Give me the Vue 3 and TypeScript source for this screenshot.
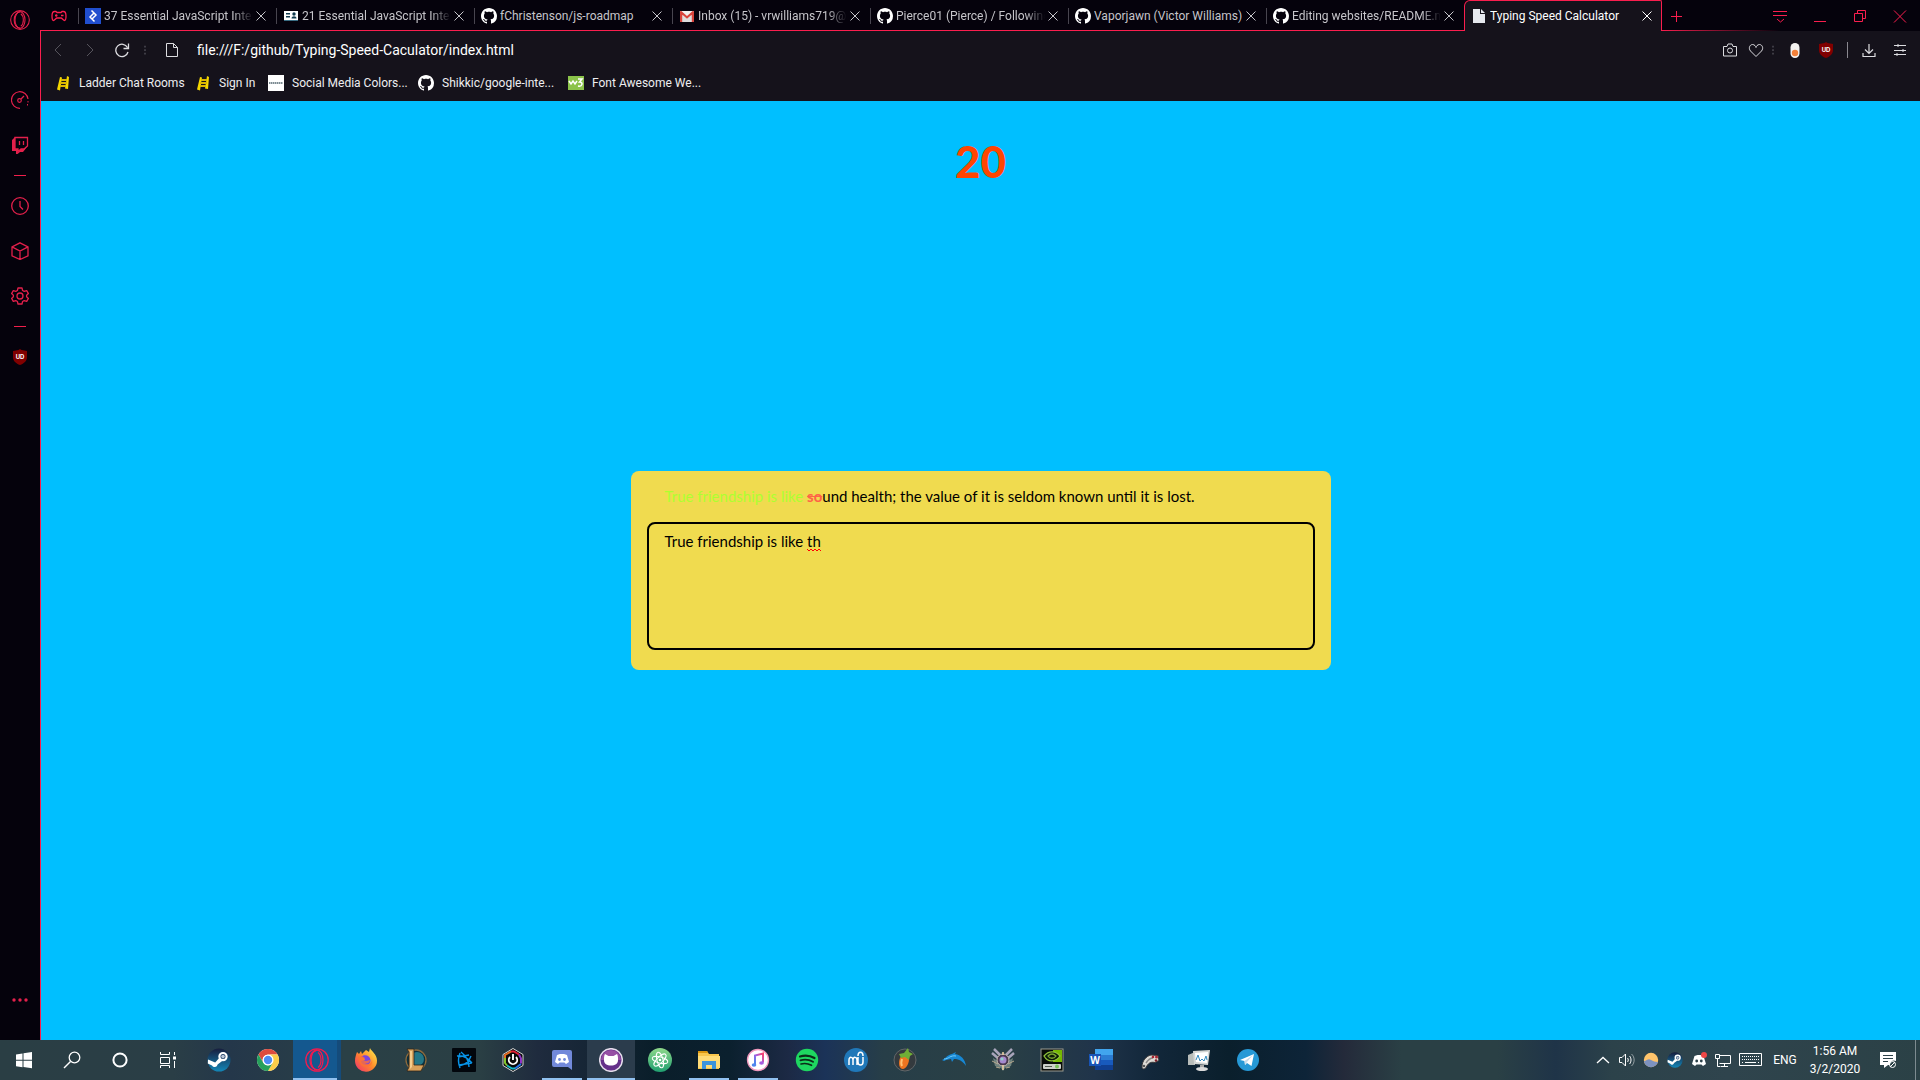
<script setup lang="ts">
import { h, ref } from 'vue'

interface Tab { title: string; icon: string; fade?: boolean; active?: boolean }
interface Bookmark { label: string; icon: string }
interface Launcher { label: string; icon: string; state?: 'running' | 'focused' | 'grouped' }

const octocat = 'M8 0C3.58 0 0 3.58 0 8c0 3.54 2.29 6.53 5.47 7.59.4.07.55-.17.55-.38 0-.19-.01-.82-.01-1.49-2.01.37-2.53-.49-2.69-.94-.09-.23-.48-.94-.82-1.13-.28-.15-.68-.52-.01-.53.63-.01 1.08.58 1.23.82.72 1.21 1.87.87 2.33.66.07-.52.28-.87.51-1.07-1.78-.2-3.64-.89-3.64-3.95 0-.87.31-1.59.82-2.15-.08-.2-.36-1.02.08-2.12 0 0 .67-.21 2.2.82.64-.18 1.32-.27 2-.27s1.36.09 2 .27c1.53-1.04 2.2-.82 2.2-.82.44 1.1.16 1.92.08 2.12.51.56.82 1.27.82 2.15 0 3.07-1.87 3.75-3.65 3.95.29.25.54.73.54 1.48 0 1.07-.01 1.93-.01 2.2 0 .21.15.46.55.38A8.01 8.01 0 0 0 16 8c0-4.42-3.58-8-8-8z'

const line = (d: string, width = 1) => `<path d="${d}" fill="none" stroke="currentColor" stroke-width="${width}"/>`
const steamMark = '<circle cx="12" cy="12" r="11.5" fill="url(#steam-fill)"/><path d="M1 11.500l7.200 3 4-4.500 3 3-4.600 3.600a3 3 0 0 1-5.600.9L.8 15.400z" fill="#fff"/><circle cx="16" cy="8.600" r="3.600" fill="#17375f" stroke="#fff" stroke-width="2.200"/><circle cx="16" cy="8.600" r="1.800" fill="#b9c6d8"/>'

// Each entry is [side of the square view box, markup].
const icons: Record<string, [number, string]> = {
  opera: [24, '<g fill="none" stroke="currentColor" stroke-width="1.300"><circle cx="12" cy="12" r="11.200"/><ellipse cx="12" cy="12" rx="6" ry="10"/><path d="M12 2C7.500 3 5 7 5 12s2.500 9 7 10M13 4.500c4 3 4 12 0 15"/></g>'],
  gamepad: [16, line('M5 3.500l1 1h4l1-1h1.500c2 0 2.500 2 2.500 4.500 0 3-.5 4.500-1.500 4.500S11 10 10 10H6c-1 0-2.500 2.500-3.500 2.500S1 11 1 8c0-2.500.5-4.500 2.500-4.500zM4 7.500h2.500M5.300 6.200v2.500M10 7.500h2.500', 1.300)],
  toptal: [16, '<rect width="16" height="16" fill="#204ecf"/><path d="M6.500 2.500L11 7l-4.500 4.500M9.500 13.500L5 9l4.500-4.500" fill="none" stroke="#fff" stroke-width="1.500"/>'],
  idcard: [16, '<path d="M1 3h14v9H1z" fill="#fff"/><path d="M3 5h4v1.500H3zM3 8h4v1.500H3z" fill="#123b4f"/><circle cx="11" cy="6" r="1.700" fill="#123b4f"/><path d="M8.500 10.500c0-3 5-3 5 0z" fill="#123b4f"/><path d="M1 12h14v1H1z" fill="#3a6d83"/>'],
  github: [16, `<path d="${octocat}" fill="#fff"/>`],
  gmail: [16, '<path d="M1 3h14v11H1z" fill="#f1efee"/><path d="M1 14V3.500l1-.8 6 5.300 6-5.300 1 .8V14h-2.500V7L8 11 3.500 7v7z" fill="#d8433b"/><path d="M3.500 7L8 11l4.500-4v7h-9z" fill="#ddd"/>'],
  page: [16, '<path d="M2 1h7v5h5v9H2z" fill="#e6e8ee"/><path d="M10 1l4 4h-4z" fill="#e6e8ee"/>'],
  close: [16, line('M3.500 3.500l9 9M12.500 3.500l-9 9')],
  plus: [16, line('M8.500 3v11M3 8.500h11')],
  tabmenu: [16, line('M1 3.500h14M1 7.500h14M5 11l3.500 3 3.500-3')],
  minimize: [16, line('M2 13.500h12')],
  restore: [16, line('M2.500 5.500h8v8h-8zM5.500 5.500v-3h8v8h-3')],
  windowclose: [16, line('M2 2.500l12 12M14 2.500l-12 12')],
  back: [16, line('M11 2L5 8l6 6')],
  forward: [16, line('M5 2l6 6-6 6')],
  reload: [16, line('M13.500 5.500A6.200 6.200 0 1 0 14 10M14.500 1.500v5h-5', 1.300)],
  drag: [16, '<path d="M7 3h2v2H7zM7 7h2v2H7zM7 11h2v2H7z" fill="currentColor"/>'],
  file: [16, line('M2.500 1.500h7l4 4v9h-11zM9.500 1.500v4h4')],
  camera: [16, `${line('M1.500 4.500h3.500l1-2.500h4l1 2.500h3.500v9.500h-13z')}<circle cx="8" cy="8.500" r="2.500" fill="none" stroke="currentColor"/>`],
  heart: [16, line('M8 14.500L2.500 9C0 6 2 2.500 4.500 2.500 6.500 2.500 8 4.500 8 5.500c0-1 1.500-3 3.500-3C14 2.500 16 6 13.500 9z')],
  toggle: [16, '<rect x="3.500" y="1" width="9" height="15" rx="4.500" fill="#f4f2f0"/><circle cx="8" cy="11" r="3.200" fill="#f5813a"/>'],
  shield: [16, '<path d="M8 0l1.500 1L15 2v6c0 4-3 6.500-7 8-4-1.500-7-4-7-8V2l5.500-1z" fill="#800000"/><text x="8" y="10" font-size="6" font-weight="700" font-family="Inter, sans-serif" text-anchor="middle" fill="#fff">UD</text>'],
  download: [16, line('M8 2v9M4 7.500l4 4 4-4M2 11v3.500h12V11', 1.200)],
  sliders: [16, line('M2 3.500h12M2 8.500h12M2 12.500h12M6 2v3M11 7v3M5 11v3')],
  ladder: [16, '<path d="M5 2l2 .5-2 13-3-1zM12 1l2 1-1 12-3-.5z" fill="#f5d800"/><path d="M6 4h6v2H6zM5 7h7v2H5zM5 10h6v2H5z" fill="#d9b800"/>'],
  swatch: [16, '<rect width="16" height="16" fill="#fff"/><path d="M1 8h14" stroke="#52666f" stroke-width="1.500" stroke-dasharray="1.500 .5"/>'],
  w3: [16, '<rect width="16" height="14" y="1" fill="#8bc34a"/><path d="M1 6l2 3 2-3 2 3 2-3M10 4h4l-2.500 3c4 0 3 5-1.500 4" fill="none" stroke="#fff" stroke-width="1.500"/>'],
  speed: [18, `${line('M9 17.300A8.300 8.300 0 1 1 17 8', 1.200)}<path d="M17 10v1.500M16.500 13v1.500" stroke="currentColor"/><circle cx="8.500" cy="9.500" r="1.800" fill="none" stroke="currentColor" stroke-width="1.200"/>${line('M10 8l3-3', 1.300)}`],
  twitch: [18, '<path d="M1 4l3-3v12h3v3l3-3h3l3-2-4 5H9l-3 2.500H5V15H1z" fill="currentColor"/><path d="M4 1.500h12.500V10L13 13h-3l-3 2.500V13H4zM8.500 5v4M12.500 5v4" fill="none" stroke="currentColor" stroke-width="1.300"/>'],
  clock: [18, `<circle cx="9" cy="9" r="8.300" fill="none" stroke="currentColor" stroke-width="1.300"/>${line('M9 4v5.500l3 3', 1.300)}`],
  cube: [18, line('M9 .8l8 4v9L9 17.500l-8-3.700v-9zM1 4.800L9 9l8-4.200M9 9v8.500', 1.300)],
  gear: [18, '<path d="M7 1h4l.6 2.500 1.600.9 2.500-.8 1.700 3-1.800 1.600v1.600l1.800 1.600-1.700 3-2.500-.8-1.600.9L11 17H7l-.6-2.500-1.600-.9-2.500.8-1.700-3 1.800-1.600V8.200L.6 6.600l1.700-3 2.500.8 1.600-.9z" fill="none" stroke="currentColor" stroke-width="1.300" stroke-linejoin="round"/><circle cx="9" cy="9" r="3" fill="none" stroke="currentColor" stroke-width="1.300"/>'],
  dots: [18, '<g fill="currentColor"><circle cx="3" cy="9" r="1.700"/><circle cx="9" cy="9" r="1.700"/><circle cx="15" cy="9" r="1.700"/></g>'],
  windows: [24, '<path d="M4 6.500L10.500 5.500v6.300H4zM11.500 5.300L20 4v7.800h-8.500zM4 12.800h6.500v6.400L4 18.200zM11.500 12.800H20v7.400l-8.500-1.200z" fill="#fff"/>'],
  search: [24, '<circle cx="14.500" cy="9.500" r="5.300" fill="none" stroke="#fff" stroke-width="1.300"/><path d="M10.500 13.500L4 20" stroke="#fff" stroke-width="1.500"/>'],
  cortana: [24, '<circle cx="12" cy="12" r="6.600" fill="none" stroke="#fff" stroke-width="2"/>'],
  taskview: [24, '<g fill="none" stroke="#fff"><path d="M4.500 4v2.500h9V4M4.500 9.500h9v6h-9zM4.500 20v-2.500h9V20M18.500 4v3M18.500 13v7"/></g><path d="M17 8.500h3v3h-3z" fill="#fff"/>'],
  steam: [24, steamMark],
  chrome: [24, '<circle cx="12" cy="12" r="11" fill="#fff"/><path d="M2.470 6.500a11 11 0 0 1 19.060 0H12a5.500 5.500 0 0 0-4.800 8.250z" fill="#dd4b3e"/><path d="M21.530 6.500A11 11 0 0 1 12 23l4.760-8.250A5.500 5.500 0 0 0 12 6.500z" fill="#fccd48"/><path d="M12 23A11 11 0 0 1 2.470 6.500l4.770 8.250a5.500 5.500 0 0 0 9.520 0z" fill="#26a05b"/><circle cx="12" cy="12" r="5.200" fill="#fff"/><circle cx="12" cy="12" r="4.200" fill="#4b8bf4"/>'],
  firefox: [24, '<path d="M12 2l3 2 1-4c1 3 7 6 7 12.500A11 11 0 0 1 1 13C1 9 2 7 3 4l2 2 2-3 1 3z" fill="url(#fox-fill)"/><path d="M7 9c3-3 9-2 9.500 3A5 5 0 0 1 12 17c-3 0-5-2-5-4l4-1-1-2z" fill="#7a45e0"/><path d="M4 9l4-1 3 2-2 2 3 1 4-1c0 3-3 4-5 3 3 3 7 0 7-3 1 4-2 7-6 7-5 0-7-4-8-10z" fill="#ff7133" opacity=".8"/>'],
  league: [24, '<circle cx="13" cy="12" r="10" fill="#0b3140" stroke="#8d6a3c" stroke-width="1.300"/><circle cx="14" cy="11" r="7" fill="#247787"/><path d="M4 1h7v16h10l-3 6H4l2-4V4z" fill="#d8a15b" stroke="#302317" stroke-width=".8"/><path d="M7 3h2v16l-2 2z" fill="#f3cc8c"/>'],
  battlenet: [24, '<rect width="24" height="24" rx="1" fill="#02060c"/><g fill="none" stroke="#0794e9" stroke-width="1.400"><path d="M9 4c5 4 8 9 8 15M19 8c-2 6-6 9-12 10M5 8c5-1 10 1 15 7M8 5c-2 5-2 10 0 15M6 9l11-2M7 17l13-2"/></g>'],
  icue: [24, '<path d="M12 .5l10 6v11l-10 6-10-6v-11z" fill="#080808" stroke="#d8d8d8"/><g fill="none" stroke-width="2"><path d="M4 10V7l6-3.500" stroke="#e56b20"/><path d="M10 3.500h3l5 3" stroke="#e31e35"/><path d="M18 6.500l2 4v5" stroke="#9333c7"/><path d="M20 16l-6 4.500" stroke="#2573e8"/><path d="M14 20.500h-3l-5-3" stroke="#11b8c5"/><path d="M6 17.500L4 15v-5" stroke="#83c62d"/></g><circle cx="12" cy="12" r="6.500" fill="#090909"/><path d="M9 9a4.200 4.200 0 1 0 6 0M12 6v6" fill="none" stroke="#fff" stroke-width="1.900"/>'],
  discord: [24, '<path d="M4 2h16a2 2 0 0 1 2 2v18l-4-3H4a2 2 0 0 1-2-2V4a2 2 0 0 1 2-2z" fill="#7289da"/><path d="M7 7l3-1h4l3 1 2 7-3 2-1.500-1.500h-5L8 16l-3-2z" fill="#fff"/><circle cx="9.500" cy="11.500" r="1.400" fill="#7289da"/><circle cx="14.500" cy="11.500" r="1.400" fill="#7289da"/>'],
  desktop: [24, '<circle cx="12" cy="12" r="11.300" fill="#64308a" stroke="#e5ddeb" stroke-width="1.500"/><path d="M2 12a10 10 0 0 1 20 0z" fill="#9650a4"/><path d="M6 6l3.500 2h5L18 6c1 2 1 3 1 6 0 4-3 5.500-7 5.500S5 16 5 12c0-3 0-4 1-6z" fill="#fff"/>'],
  atom: [24, '<circle cx="12" cy="12" r="12" fill="url(#atom-fill)"/><g fill="none" stroke="#fff"><ellipse cx="12" cy="12" rx="8" ry="3" transform="rotate(15 12 12)"/><ellipse cx="12" cy="12" rx="8" ry="3" transform="rotate(75 12 12)"/><ellipse cx="12" cy="12" rx="8" ry="3" transform="rotate(135 12 12)"/></g><circle cx="12" cy="12" r="1.300" fill="#fff"/>'],
  explorer: [24, '<path d="M1 3h9l2 3h10v15H1z" fill="#f8c64c"/><path d="M1 3h9l1 2H1z" fill="#db9710"/><path d="M1 8h22v12H1z" fill="#ffdc77"/><path d="M5 21v-8h14v8h-4v-4H9v4z" fill="#3c94dc"/>'],
  itunes: [24, '<circle cx="12" cy="12" r="10.500" fill="#fff" stroke="#f198bd" stroke-width="1.300"/><path d="M9 16.500V7.500l8-2v9" fill="none" stroke="url(#tune-fill)" stroke-width="2"/><ellipse cx="8" cy="17" rx="2.300" ry="1.800" fill="#4e85ed"/><ellipse cx="15.500" cy="15" rx="2.300" ry="1.800" fill="#a55ee0"/>'],
  spotify: [24, '<circle cx="12" cy="12" r="11.200" fill="#1ed760"/><g fill="none" stroke="#0b2c18" stroke-linecap="round"><path d="M5 8.500c5-1.500 10-1 14.500 1.500" stroke-width="2.200"/><path d="M5.500 12.300c4.500-1.300 8.500-.8 12.500 1.500" stroke-width="1.900"/><path d="M6 16c3.500-1 7-.6 10.500 1.300" stroke-width="1.600"/></g>'],
  musescore: [24, '<circle cx="12" cy="12" r="12" fill="#2078b9"/><path d="M5 17v-5c0-4 4-3 4 0v5M9 12c0-4 4-3 4 0v5M14 9v5c0 4 5 4 5 0V9M14 8c0-5 5-5 5 0" fill="none" stroke="#fff" stroke-width="1.500"/>'],
  flstudio: [24, '<circle cx="12" cy="12" r="11" fill="#343a3e" stroke="#626668"/><path d="M7 10c2-4 9-4 9 1 0 6-4 10-6 10-4 0-5-6-3-11z" fill="#ed7420"/><path d="M9 11c-1 3-1 5 0 7" stroke="#ffc173" stroke-width="2" fill="none"/><path d="M6 6l5-1 4-5 1 4 4 2-3 2-1 4-4-3-4 1z" fill="#6faf36"/>'],
  dolphin: [24, '<path d="M0 12c3-1 5-5 10-6l4-2-1 2c6 1 10 5 11 12-4-6-8-7-12-7l-2 3-1-3-5 1-2 1z" fill="#1787d3"/><path d="M2 11c5 0 6-4 12-3" stroke="#71cdfd" fill="none"/>'],
  crest: [24, '<path d="M3 1l6 6M21 1l-6 6M1 5l7 6M23 5l-7 6" stroke="#a9a5bb" stroke-width="2.500"/><path d="M2 10l5 3 5-7 5 7 5-3-2 8-6 2-2 3-2-3-6-2z" fill="#6f827e"/><path d="M1 13l6 3M23 13l-6 3M5 19l4 1M19 19l-4 1" stroke="#b7a98f"/><circle cx="12" cy="12" r="6" fill="#4a3a50" stroke="#c0b9b0"/><circle cx="12" cy="12" r="3.500" fill="#a589ce"/><circle cx="11" cy="11" r="1.500" fill="#8fd0c8"/><path d="M12 4v3M12 17v5" stroke="#efd2a6" stroke-width="1.500"/>'],
  nvidia: [24, '<rect x="1" y="1" width="22" height="22" fill="#070b07" stroke="#9c9b91"/><path d="M13 2h9v12h-9z" fill="#74b800"/><path d="M4 8c5-6 12-5 16 0-4 6-12 7-16 0z" fill="#0b1a08" stroke="#8fc23a" stroke-width="1.300"/><path d="M8 8c3-3 6-2 8 0-2 3-6 3-8 0z" fill="none" stroke="#78a52e" stroke-width="1.300"/><rect x="3" y="16" width="18" height="5" rx="1" fill="#ccd0c9"/><path d="M5 18.500h7" stroke="#535b50"/><circle cx="17" cy="18.500" r="2" fill="#79c15a"/>'],
  word: [24, '<path d="M6 1h18v6H6z" fill="#41a5ee"/><path d="M6 7h18v5H6z" fill="#2b7cd3"/><path d="M6 12h18v5H6z" fill="#185abd"/><path d="M6 17h18v5H6z" fill="#103f91"/><rect y="6" width="12" height="12" fill="#1854b6"/><text x="6" y="15.500" font-size="10" font-weight="700" font-family="Open Sans, sans-serif" text-anchor="middle" fill="#fff">W</text>'],
  wheel: [24, '<path d="M4 19c0-6 4-11 9-12l7 .5 1 5-4 2c-5-1-7 1-9 5-1 2-4 2-4-.5z" fill="#dedbd5" stroke="#383536"/><path d="M8 15c2-3 4-5 7-5" fill="none" stroke="#8b8988" stroke-width="1.500"/><circle cx="15" cy="9" r="1.300" fill="#aa2634"/><circle cx="18.500" cy="9" r="1.500" fill="#aa2634"/><circle cx="18" cy="12.500" r="1.300" fill="#7c1f2a"/><circle cx="6" cy="18" r="1.300" fill="#555"/>'],
  monitor: [24, '<path d="M1 7l7-3v13H1z" fill="#b8bdba"/><path d="M6 3l17-1-2 15-14-1z" fill="#d4d6d4"/><path d="M8 5l13-1-1 11-11-1z" fill="#fff"/><path d="M9 12l2-5 2 6 2-2 2 2 2-5 1 4" fill="none" stroke="#328ac0"/><path d="M13 17h4v3h-4z" fill="#aaa"/><ellipse cx="15" cy="21" rx="6" ry="2" fill="#dadada"/>'],
  telegram: [24, '<circle cx="12" cy="12" r="11" fill="#2699d6"/><path d="M4 12l14-6-2.500 12-4.500-3-2 2-.5-4z" fill="#fff"/><path d="M8.500 13L17 7l-6 7-2 3z" fill="#c8dcea"/>'],
  chevron: [16, '<path d="M2 11l6-5.500L14 11" fill="none" stroke="#fff" stroke-width="1.300"/>'],
  volume: [16, '<g fill="none" stroke="#fff"><path d="M.5 5.500H3L6.500 2v12L3 10.500H.5zM8.500 6c1 1 1 3 0 4M10.500 4c2 2 2 6 0 8"/><path d="M12.500 2c3.500 3 3.500 9 0 12" opacity=".5"/></g>'],
  weather: [16, '<circle cx="8" cy="8" r="7.200" fill="#ffc46b"/><path d="M1 9c3 0 4-3 7-1 2 1 4 2 7 2-1 3-4 5.200-7 5.200S1.500 13 1 9z" fill="#7d92bf"/>'],
  traysteam: [24, steamMark],
  traydiscord: [16, '<path d="M3.500 4l3-1h3l3 1L15 12l-3 2-1.500-1.500h-5L4 14l-3-2z" fill="#fff"/><circle cx="5.700" cy="9" r="1.400" fill="#2d424a"/><circle cx="10.300" cy="9" r="1.400" fill="#2d424a"/><circle cx="13" cy="3" r="3" fill="#f04747"/>'],
  network: [16, '<g fill="none" stroke="#fff"><path d="M4.500 3.500h11v8h-11M9.500 11.500v3M6 14.500h7M.5 2.500h4v4h-4zM2.500 6.500v8h3"/></g>'],
  keyboard: [24, '<g fill="none" stroke="#fff"><path d="M1.500 5.500h22v12h-22z"/><path d="M4 8.500h17M4 11.500h17" stroke-dasharray="1 1"/><path d="M7 14.500h11M4 14.500h1M20 14.500h1"/></g>'],
  notice: [16, '<path d="M0 0h16v9a4 4 0 0 0-6 4H8l-4 3v-3H0z" fill="#fff"/><path d="M3 3.500h10M3 6.500h10M3 9.500h5" stroke="#2d424a"/><circle cx="12.500" cy="12.500" r="3" fill="none" stroke="#fff"/><path d="M10 15l5-5" stroke="#fff"/>'],
}

const Icon = (props: { name: string; size: number }) => {
  const [box, markup] = icons[props.name]
  return h('svg', {
    width: props.size,
    height: props.size,
    viewBox: `0 0 ${box} ${box}`,
    'aria-hidden': 'true',
    innerHTML: markup,
  })
}
Icon.props = ['name', 'size']

const tabs: Tab[] = [
  { title: '37 Essential JavaScript Inter', icon: 'toptal', fade: true },
  { title: '21 Essential JavaScript Inter', icon: 'idcard', fade: true },
  { title: 'fChristenson/js-roadmap', icon: 'github' },
  { title: 'Inbox (15) - vrwilliams719@', icon: 'gmail', fade: true },
  { title: 'Pierce01 (Pierce) / Following', icon: 'github', fade: true },
  { title: 'Vaporjawn (Victor Williams)', icon: 'github' },
  { title: 'Editing websites/README.m', icon: 'github', fade: true },
  { title: 'Typing Speed Calculator', icon: 'page', active: true },
]

const bookmarks: Bookmark[] = [
  { label: 'Ladder Chat Rooms', icon: 'ladder' },
  { label: 'Sign In', icon: 'ladder' },
  { label: 'Social Media Colors...', icon: 'swatch' },
  { label: 'Shikkic/google-inte...', icon: 'github' },
  { label: 'Font Awesome We...', icon: 'w3' },
]

const system: Launcher[] = [
  { label: 'Start', icon: 'windows' },
  { label: 'Search', icon: 'search' },
  { label: 'Cortana', icon: 'cortana' },
  { label: 'Task View', icon: 'taskview' },
]

const apps: Launcher[] = [
  { label: 'Steam', icon: 'steam' },
  { label: 'Chrome', icon: 'chrome' },
  { label: 'Opera GX', icon: 'opera', state: 'grouped' },
  { label: 'Firefox', icon: 'firefox' },
  { label: 'League of Legends', icon: 'league' },
  { label: 'Battle.net', icon: 'battlenet' },
  { label: 'iCUE', icon: 'icue' },
  { label: 'Discord', icon: 'discord', state: 'running' },
  { label: 'GitHub Desktop', icon: 'desktop', state: 'focused' },
  { label: 'Atom', icon: 'atom' },
  { label: 'File Explorer', icon: 'explorer', state: 'running' },
  { label: 'iTunes', icon: 'itunes', state: 'running' },
  { label: 'Spotify', icon: 'spotify' },
  { label: 'MuseScore', icon: 'musescore' },
  { label: 'FL Studio', icon: 'flstudio' },
  { label: 'Dolphin', icon: 'dolphin' },
  { label: 'Crest', icon: 'crest' },
  { label: 'NVIDIA', icon: 'nvidia' },
  { label: 'Word', icon: 'word' },
  { label: 'Controller', icon: 'wheel' },
  { label: 'System Monitor', icon: 'monitor' },
  { label: 'Telegram', icon: 'telegram' },
]

const tray = ['chevron', 'volume', 'weather', 'traysteam', 'traydiscord', 'network']

const address = ref('file:///F:/github/Typing-Speed-Caculator/index.html')
const typed = ref('True friendship is like th')
</script>

<template>
  <div class="screen">
    <svg class="defs" aria-hidden="true">
      <defs>
        <linearGradient id="steam-fill" x1="0" y1="0" x2="0" y2="1">
          <stop offset="0" stop-color="#171d3d" /><stop offset="1" stop-color="#1387b8" />
        </linearGradient>
        <linearGradient id="fox-fill" x1="1" y1="0" x2="0" y2="1">
          <stop offset="0" stop-color="#fff44f" /><stop offset=".5" stop-color="#ff8a2a" /><stop offset="1" stop-color="#f02a72" />
        </linearGradient>
        <linearGradient id="atom-fill" x1="0" y1="0" x2="0" y2="1">
          <stop offset="0" stop-color="#8fd88a" /><stop offset="1" stop-color="#1f9f70" />
        </linearGradient>
        <linearGradient id="tune-fill" x1="1" y1="0" x2="0" y2="1">
          <stop offset="0" stop-color="#fb4169" /><stop offset=".5" stop-color="#a55ee0" /><stop offset="1" stop-color="#3b8cf0" />
        </linearGradient>
      </defs>
    </svg>

    <div class="browser">
      <nav class="sidebar" aria-label="Sidebar">
        <button class="logo" aria-label="Opera menu"><Icon name="opera" :size="20" /></button>
        <button aria-label="Speed dial"><Icon name="speed" :size="18" /></button>
        <button aria-label="Twitch"><Icon name="twitch" :size="18" /></button>
        <hr />
        <button aria-label="History"><Icon name="clock" :size="18" /></button>
        <button aria-label="Extensions"><Icon name="cube" :size="18" /></button>
        <button aria-label="Settings"><Icon name="gear" :size="18" /></button>
        <hr />
        <button aria-label="uDark"><Icon name="shield" :size="16" /></button>
        <button class="more" aria-label="Sidebar setup"><Icon name="dots" :size="18" /></button>
      </nav>

      <div class="window">
        <header class="tabstrip">
          <button class="corner" aria-label="GX Corner"><Icon name="gamepad" :size="16" /></button>
          <div v-for="tab in tabs" :key="tab.title" class="tab" :class="{ active: tab.active }">
            <Icon :name="tab.icon" :size="16" />
            <span class="title" :class="{ fade: tab.fade }">{{ tab.title }}</span>
            <button class="tabclose" :aria-label="`Close ${tab.title}`"><Icon name="close" :size="16" /></button>
          </div>
          <button class="newtab" aria-label="New tab"><Icon name="plus" :size="16" /></button>
          <div class="controls">
            <button aria-label="Tab menu"><Icon name="tabmenu" :size="16" /></button>
            <button aria-label="Minimize"><Icon name="minimize" :size="16" /></button>
            <button aria-label="Restore"><Icon name="restore" :size="16" /></button>
            <button aria-label="Close window"><Icon name="windowclose" :size="16" /></button>
          </div>
        </header>

        <div class="frame">
          <div class="toolbar">
            <button class="nav dim" aria-label="Back"><Icon name="back" :size="16" /></button>
            <button class="nav dim" aria-label="Forward"><Icon name="forward" :size="16" /></button>
            <button class="nav" aria-label="Reload"><Icon name="reload" :size="16" /></button>
            <Icon class="grip" name="drag" :size="14" />
            <Icon class="fileicon" name="file" :size="16" />
            <input v-model="address" class="address" aria-label="Address" spellcheck="false" />
            <div class="actions">
              <button aria-label="Snapshot"><Icon name="camera" :size="16" /></button>
              <button aria-label="Favourite"><Icon name="heart" :size="16" /></button>
              <Icon class="grip" name="drag" :size="14" />
              <button class="roomy" aria-label="Toggle extension"><Icon name="toggle" :size="16" /></button>
              <button aria-label="uDark"><Icon name="shield" :size="16" /></button>
              <span class="rule"></span>
              <button aria-label="Downloads"><Icon name="download" :size="16" /></button>
              <button class="roomy" aria-label="Easy setup"><Icon name="sliders" :size="16" /></button>
            </div>
          </div>

          <nav class="bookmarks" aria-label="Bookmarks">
            <a v-for="mark in bookmarks" :key="mark.label" href="#"><Icon :name="mark.icon" :size="16" />{{ mark.label }}</a>
          </nav>

          <main class="page">
            <div class="timer">20</div>
            <section class="card">
              <label class="quote" for="quote-input"><span class="correct">True friendship is like </span><span class="incorrect">so</span>und health; the value of it is seldom known until it is lost.</label>
              <div class="entry">
                <textarea id="quote-input" v-model="typed" spellcheck="false"></textarea>
                <svg class="squiggle" width="14" height="4" viewBox="0 0 14 4" aria-hidden="true">
                  <path d="M0 1l2 2 2-2 2 2 2-2 2 2 2-2 2 2" fill="none" stroke="#f00" />
                </svg>
              </div>
            </section>
          </main>
        </div>
      </div>
    </div>

    <footer class="taskbar">
      <div class="system">
        <button v-for="item in system" :key="item.label" :aria-label="item.label"><Icon :name="item.icon" :size="24" /></button>
      </div>
      <div class="apps">
        <button v-for="app in apps" :key="app.label" :class="app.state" :aria-label="app.label"><Icon :name="app.icon" :size="24" /></button>
      </div>
      <div class="tray">
        <button v-for="name in tray" :key="name" :aria-label="name"><Icon :name="name" :size="16" /></button>
        <button class="wide" aria-label="Touch keyboard"><Icon name="keyboard" :size="24" /></button>
        <button class="lang">ENG</button>
        <button class="clock"><span>1:56 AM</span><span>3/2/2020</span></button>
        <button class="notice" aria-label="Notifications"><Icon name="notice" :size="16" /></button>
      </div>
    </footer>
  </div>
</template>

<style>
body {
  margin: 0;
  background: #05020c;
}
</style>

<style scoped>
* {
  box-sizing: border-box;
}
.screen {
  display: flex;
  flex-direction: column;
  min-height: 100vh;
  font-family: Roboto, "Open Sans", sans-serif;
  font-size: 12px;
  color: #fff;
}
.defs {
  position: absolute;
  width: 0;
  height: 0;
}
button {
  display: flex;
  flex: none;
  align-items: center;
  justify-content: center;
  margin: 0;
  padding: 0;
  border: 0;
  background: none;
  color: inherit;
  font: inherit;
}
svg {
  flex: none;
}
.browser {
  display: flex;
  flex: 1;
}

/* Sidebar */
.sidebar {
  display: flex;
  flex: none;
  flex-direction: column;
  width: 40px;
  background: #05020c;
  color: #e3204b;
}
.sidebar button {
  height: 45px;
}
.sidebar .logo {
  height: 40px;
  margin-bottom: 37px;
}
.sidebar hr {
  width: 12px;
  height: 1px;
  margin: 8px auto 7px;
  border: 0;
  background: #f01f4b;
}
.sidebar .more {
  margin-top: auto;
  margin-bottom: 18px;
}

/* Tab strip */
.window {
  display: flex;
  flex: 1;
  flex-direction: column;
  min-width: 0;
}
.tabstrip {
  display: flex;
  align-items: center;
  height: 31px;
  background:
    linear-gradient(to right, #fa1e4e calc(100% - 260px), transparent calc(100% - 140px)) bottom / 100% 1px no-repeat,
    #05020c;
  color: #fa1e4e;
}
.corner {
  width: 38px;
}
.tab {
  display: flex;
  flex: 0 1 198px;
  align-items: center;
  min-width: 0;
  height: 16px;
  padding: 0 7px 0 6px;
  border-left: 1px solid #48454f;
  color: #c6c5ca;
}
.tab.active {
  height: 31px;
  border: 1px solid #fa1e4e;
  border-bottom: 0;
  border-radius: 6px 2px 0 0;
  padding-right: 6px;
  background: #15121b;
  color: #fff;
}
.title {
  flex: 1;
  margin-left: 3px;
  overflow: hidden;
  white-space: nowrap;
}
.title.fade {
  mask-image: linear-gradient(to left, transparent, #000 20px);
}
.tabclose {
  width: 16px;
}
.newtab {
  width: 28px;
}
.controls {
  display: flex;
  margin-left: auto;
}
.controls button {
  width: 40px;
}

/* Toolbars */
.frame {
  display: flex;
  flex: 1;
  flex-direction: column;
  border-left: 1px solid #fa1e4e;
  background: #15121b;
}
.toolbar {
  display: flex;
  align-items: center;
  height: 38px;
  padding-left: 1px;
  color: #dcdce0;
}
.nav {
  width: 32px;
}
.dim {
  color: #56545c;
}
.grip {
  color: #45434c;
}
.fileicon {
  margin: 0 17px 0 12px;
}
.address {
  flex: 1;
  min-width: 0;
  padding: 0;
  border: 0;
  outline: 0;
  background: none;
  color: #fff;
  font: inherit;
  font-size: 14px;
}
.actions {
  display: flex;
  align-items: center;
  padding-right: 2px;
}
.actions button {
  width: 26px;
}
.actions .roomy {
  width: 36px;
}
.actions .grip {
  margin: 0 -3px;
}
.actions .rule {
  width: 1px;
  height: 16px;
  margin: 0 8px;
  background: #8a8890;
}
.bookmarks {
  display: grid;
  grid-template-columns: 140px 73px 150px 150px 140px;
  align-items: center;
  height: 32px;
  padding: 0 0 4px 14px;
}
.bookmarks a {
  display: flex;
  align-items: center;
  gap: 8px;
  color: #eeeef0;
  text-decoration: none;
  white-space: nowrap;
}

/* Typing page */
.page {
  display: grid;
  flex: 1;
  grid-template-rows: 1fr auto 1fr;
  justify-items: center;
  background: #00bfff;
  color: #000;
  font-family: Lato, sans-serif;
}
.timer {
  padding-top: 32px;
  color: #ff4500;
  font-size: 44px;
  font-weight: 900;
  line-height: 56px;
}
.card {
  width: 700px;
  max-width: 90%;
  padding: 15px 16px 20px;
  border-radius: 8px;
  background: #f0db4f;
  font-size: 15px;
  line-height: 20px;
}
.quote {
  display: block;
  margin: 0 18px 16px;
}
.correct {
  color: #adff2f;
}
.incorrect {
  color: #ff6347;
  font-weight: 700;
  text-decoration: line-through;
}
.entry {
  position: relative;
}
textarea {
  display: block;
  width: 100%;
  height: 128px;
  padding: 7px 16px;
  border: 2px solid #000;
  border-radius: 8px;
  outline: 0;
  resize: none;
  background: none;
  color: #000;
  font: inherit;
}
.squiggle {
  position: absolute;
  top: 26px;
  left: 160px;
}

/* Taskbar */
.taskbar {
  display: flex;
  height: 40px;
  background: linear-gradient(to right, #2a3e44, #2a3e46 9%, #24374a 12%, #2a4046 18%, #2a3f44 25%, #1f2b3e 28%, #0a1e2a 34%, #0b202e 38%, #1c2944 41%, #1b3358 43%, #273e48 46%, #2a4045 52%, #20344a 57%, #12273a 60%, #0a1f2c 64%, #0d2438 68%, #242a3a 70%, #2a4045 73%, #2a4045 78%, #1f3448 81%, #2c424a 84%, #2f444d 90%, #2b4146);
}
.system,
.apps,
.tray {
  display: flex;
}
.system button,
.apps button {
  width: 48px;
}
.apps {
  gap: 1px;
  margin-left: 3px;
}
.apps button {
  background-position: bottom;
  background-repeat: no-repeat;
}
.apps .running {
  background-image: linear-gradient(#91c1f0, #91c1f0);
  background-size: 40px 2px;
}
.apps .focused {
  background-color: #2b3c4c;
  background-image: linear-gradient(#91c1f0, #91c1f0);
  background-size: 100% 2px;
}
.apps .grouped {
  border-right: 4px solid #154b7a;
  padding-left: 4px;
  background-color: #14588f;
  background-image: linear-gradient(#91c1f0, #91c1f0);
  background-size: 100% 2px;
  color: #ee1c50;
}
.tray {
  margin-left: auto;
  padding-right: 4px;
  border-right: 1px solid #7d8b90;
  margin-right: 4px;
}
.tray button {
  width: 24px;
}
.tray .wide {
  width: 30px;
}
.tray .lang {
  width: 40px;
}
.tray .clock {
  flex-direction: column;
  width: 60px;
  line-height: 18px;
}
.tray .notice {
  width: 46px;
}
</style>
